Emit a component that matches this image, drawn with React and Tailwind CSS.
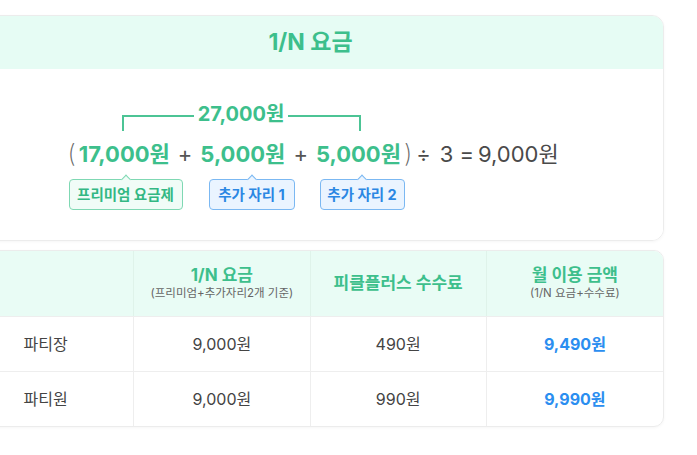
const GREEN = 'text-[#3dbf8c]'

const ROWS = [
  { role: '파티장', share: '9,000원', fee: '490원', total: '9,490원' },
  { role: '파티원', share: '9,000원', fee: '990원', total: '9,990원' },
]

function Badge({ children, tone, className }) {
  const isGreen = tone === 'green'
  return (
    <div
      className={`relative flex h-[31px] items-center justify-center rounded-[4px] border text-[14.5px] font-bold ${
        isGreen ? 'border-[#7fd8b3] bg-[#f0fcf7] text-[#33b884]' : 'border-[#7bb8f2] bg-[#eaf4ff] text-[#2b87e3]'
      } ${className}`}
    >
      <span
        className={`absolute -top-[4px] left-1/2 h-[7px] w-[7px] -translate-x-1/2 rotate-45 border-l border-t ${
          isGreen ? 'border-[#7fd8b3] bg-[#f0fcf7]' : 'border-[#7bb8f2] bg-[#eaf4ff]'
        }`}
      />
      <span className="relative">{children}</span>
    </div>
  )
}

function Amount({ children, className = '' }) {
  return <span className={`text-[22px] font-bold ${GREEN} ${className}`}>{children}</span>
}

export default function App() {
  return (
    <div
      className="h-[455px] w-[697px] overflow-hidden bg-white"
      style={{ fontFamily: 'Inter, "Noto Sans CJK KR", sans-serif' }}
    >
      <div className="ml-[-43px] w-[707px] pt-[15px]">
        <section className="overflow-hidden rounded-[12px] border border-[#ececec] shadow-[0_1px_3px_rgba(0,0,0,0.04)]">
          <div className={`flex h-[53px] items-center justify-center bg-[#e6fcf4] text-[23px] font-bold ${GREEN}`}>
            1/N 요금
          </div>

          <div className="bg-white pb-[30px] pt-[34px]">
            <div className="mx-auto w-[486px]">
              <div className="ml-[54px] flex w-[239px] items-start">
                <div className="mt-[12px] h-[16px] flex-1 border-l-2 border-t-2 border-[#4cc495]" />
                <span className={`px-[4px] text-[20px] font-bold leading-[22px] ${GREEN}`}>27,000원</span>
                <div className="mt-[12px] h-[16px] flex-1 border-r-2 border-t-2 border-[#4cc495]" />
              </div>

              <div className="mt-[8px] flex h-[30px] items-center whitespace-nowrap text-[22px] text-[#4a4a4a]">
                <span className="text-[25px] font-extralight text-[#666]">(</span>
                <Amount className="ml-[3px]">17,000원</Amount>
                <span className="mx-[8px] text-[#555]">+</span>
                <Amount>5,000원</Amount>
                <span className="mx-[8px] text-[#555]">+</span>
                <Amount>5,000원</Amount>
                <span className="ml-[3px] text-[25px] font-extralight text-[#666]">)</span>
                <span className="ml-[4px]">÷</span>
                <span className="ml-[9px]">3</span>
                <span className="ml-[6px]">=</span>
                <span className="ml-[4px]">9,000원</span>
              </div>

              <div className="mt-[10px] flex">
                <Badge tone="green" className="ml-[1px] w-[114px]">프리미엄 요금제</Badge>
                <Badge tone="blue" className="ml-[26px] w-[86px]">추가 자리 1</Badge>
                <Badge tone="blue" className="ml-[25px] w-[85px]">추가 자리 2</Badge>
              </div>
            </div>
          </div>
        </section>

        <section className="mt-[9px] overflow-hidden rounded-[10px] border border-[#ececec] shadow-[0_1px_3px_rgba(0,0,0,0.04)]">
          <div className="grid h-[65px] grid-cols-4 bg-[#e9fcf5]">
            <div className="border-r border-[#dff3ea]" />
            <div className="flex flex-col items-center justify-center border-r border-[#dff3ea] pb-[2px]">
              <span className={`text-[17px] font-bold leading-[22px] ${GREEN}`}>1/N 요금</span>
              <span className="text-[11.5px] leading-[15px] text-[#666]">(프리미엄+추가자리2개 기준)</span>
            </div>
            <div className="flex items-center justify-center border-r border-[#dff3ea]">
              <span className={`text-[17px] font-bold ${GREEN}`}>피클플러스 수수료</span>
            </div>
            <div className="flex flex-col items-center justify-center pb-[2px]">
              <span className={`text-[17px] font-bold leading-[22px] ${GREEN}`}>월 이용 금액</span>
              <span className="text-[11.5px] leading-[15px] text-[#666]">(1/N 요금+수수료)</span>
            </div>
          </div>

          {ROWS.map((r) => (
            <div key={r.role} className="grid h-[55px] grid-cols-4 border-t border-[#eeeeee] text-[16px] text-[#444]">
              <div className="flex items-center justify-center border-r border-[#eeeeee]">{r.role}</div>
              <div className="flex items-center justify-center border-r border-[#eeeeee]">{r.share}</div>
              <div className="flex items-center justify-center border-r border-[#eeeeee]">{r.fee}</div>
              <div className="flex items-center justify-center font-bold text-[#2b8ef0]">{r.total}</div>
            </div>
          ))}
        </section>
      </div>
    </div>
  )
}
